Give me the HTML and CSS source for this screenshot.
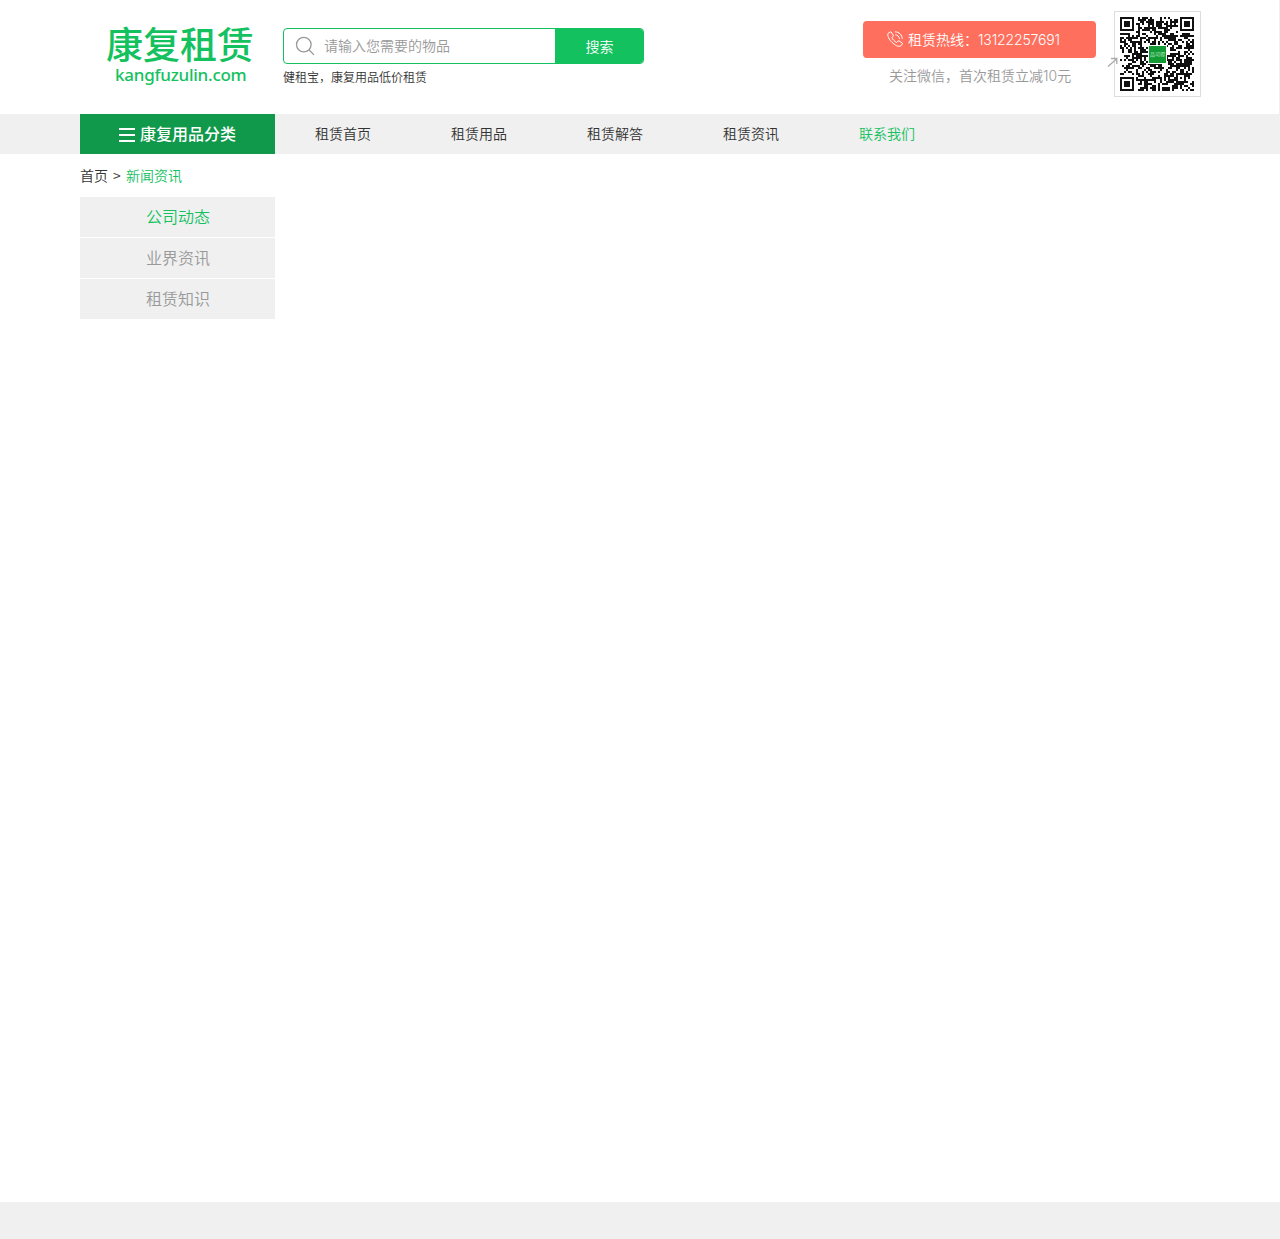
FILE: index.html
```html
<!DOCTYPE html>
<html lang="zh-CN">
<head>
<meta charset="utf-8">
<title>康复租赁 - 新闻资讯</title>
<link rel="stylesheet" href="styles.css">
</head>
<body>
<header class="header">
  <div class="header-inner">
    <a class="logo"><span class="logo-name">康复租赁</span><span class="logo-domain">kangfuzulin.com</span></a>
    <div class="search">
      <div class="search-box">
        <svg class="search-icon" width="20" height="20" viewBox="0 0 20 20" fill="none" stroke="#999" stroke-width="1.3"><circle cx="8.8" cy="8.600" r="7.300"/><path d="M13.900 13.800 19 18.900"/></svg>
        <span class="search-hint">请输入您需要的物品</span>
        <button class="search-button">搜索</button>
      </div>
      <p class="search-note">健租宝，康复用品低价租赁</p>
    </div>
    <div class="contact">
      <div class="hotline">
        <svg class="phone" width="16" height="16" viewBox="0 0 16 16" fill="none" stroke="#fff" stroke-width="1"><path d="M3.200.9 1.200 2.300C-.2 4.600 2.400 8.900 5 11.300c2.600 2.500 6.300 5.200 8.900 3.500l1.500-2-.1-.8-3.300-2.200-.9.1-1.500 1.600C7.800 10.700 5.500 8.300 4.900 6.700l1.300-1.600.1-.9L4.100 1z"/><path d="M8 .8c4 0 7.200 3.100 7.300 7.100M8.300 3.700c2.200.2 4 2 4.200 4.200"/></svg>
        <span>租赁热线：</span><span class="number">13122257691</span>
      </div>
      <p class="follow">关注微信，首次租赁立减<span class="ten">10</span>元</p>
    </div>
    <div class="qr-wrap">
      <svg class="arrow" width="12" height="12" viewBox="0 0 12 12" fill="none" stroke="#aaa" stroke-width="1.3"><path d="M1 10.500 9.500 3M4 2.500H9.800v5.500"/></svg>
      <div class="qr">
        <svg width="74" height="74" viewBox="0 0 37 37"><path id="modules" fill="#111"/></svg>
        <span class="qr-badge">品可得</span>
      </div>
    </div>
  </div>
</header>
<nav class="nav">
  <div class="nav-inner">
    <a class="category"><svg width="16" height="14" viewBox="0 0 16 14"><path d="M0 1h16M0 7h16M0 13h16" stroke="#fff" stroke-width="2"/></svg>康复用品分类</a>
    <a class="nav-link">租赁首页</a><a class="nav-link">租赁用品</a><a class="nav-link">租赁解答</a><a class="nav-link">租赁资讯</a><a class="nav-link active">联系我们</a>
  </div>
</nav>
<main class="main">
  <div class="crumbs">首页 &gt; <a class="active">新闻资讯</a></div>
  <aside class="side"><a class="side-link active">公司动态</a><a class="side-link">业界资讯</a><a class="side-link">租赁知识</a></aside>
</main>
<footer class="footer"></footer>
<script src="qr.js"></script>
</body>
</html>
```
FILE: qr.js
```js
// Draws the code's modules: three finder squares, one alignment square, and data cells.
const size = 37;
let seed = 20177;
let d = "";

function ring(x, y, x0, y0, n) {
  const r = Math.max(Math.abs(x - x0 - (n - 1) / 2), Math.abs(y - y0 - (n - 1) / 2));
  return n === 7 ? r !== 2 && r < 4 : r !== 1;
}

for (let y = 0; y < size; y++) {
  for (let x = 0; x < size; x++) {
    seed = (seed * 1103515245 + 12345) % 2147483648;
    let on = (seed >> 12) % 100 < 53;
    if (x < 8 && y < 8) on = x < 7 && y < 7 && ring(x, y, 0, 0, 7);
    else if (x > 28 && y < 8) on = x > 29 && y < 7 && ring(x, y, 30, 0, 7);
    else if (x < 8 && y > 28) on = x < 7 && y > 29 && ring(x, y, 0, 30, 7);
    else if (x > 27 && x < 33 && y > 27 && y < 33) on = ring(x, y, 28, 28, 5);
    if (on) d += `M${x} ${y}h1v1h-1z`;
  }
}
document.getElementById("modules").setAttribute("d", d);
```
FILE: styles.css
```css
* { box-sizing: border-box; }
body {
  margin: 0;
  min-height: 1239px;
  display: flex;
  flex-direction: column;
  font: 14px/20px "Noto Sans CJK SC", sans-serif;
  font-weight: 350;
  color: #333;
  background: #fff;
}
p { margin: 0; }
.header { height: 114px; border-right: 1px solid #f0f0f0; }
.header-inner { width: 1121px; margin-left: 80px; display: flex; }
.logo { width: 203px; padding: 23px 0 0 26px; display: flex; flex-direction: column; color: #14c15f; }
.logo-name { font-size: 37px; line-height: 41px; font-weight: 500; white-space: nowrap; }
.logo-domain { padding-left: 9px; font: 500 17px/22px "Noto Sans", sans-serif; letter-spacing: -.25px; }
.search { width: 361px; padding-top: 28px; }
.search-box { height: 36px; display: flex; align-items: center; border: 1px solid #14c15f; border-radius: 4px; overflow: hidden; padding-left: 11px; }
.search-hint { flex: 1; margin-left: 9px; padding-bottom: 2px; color: #999; }
.search-button { width: 88px; height: 36px; padding: 0 0 0 1px; border: 0; background: #14c15f; color: #fff; font: inherit; }
.search-note { margin-top: 3px; font-size: 12px; }
.contact { width: 233px; margin-left: 219px; padding-top: 21px; }
.hotline { height: 37px; display: flex; align-items: center; padding: 0 0 2px 24px; border-radius: 4px; background: #ff6f5e; color: #fff; }
.phone { margin-right: 5px; }
.number { padding-top: 2px; font-family: Inter, sans-serif; letter-spacing: -.15px; }
.follow { margin-top: 7px; padding-left: 26px; color: #999; }
.ten { font-family: Inter, sans-serif; }
.qr-wrap { display: flex; align-items: center; margin: 11px 0 0 11px; }
.arrow { margin: 16px -5px 0 0; z-index: 1; }
.qr { position: relative; width: 87px; height: 86px; padding: 5px; border: 1px solid #ddd; }
.qr svg { display: block; filter: blur(.5px); }
.qr-badge { position: absolute; left: 34px; top: 34px; width: 17px; height: 17px; outline: 1px solid #fff; background: #129a35; color: #d8f5df; font-size: 5px; line-height: 16px; text-align: center; }
.nav { height: 40px; background: #f0f0f0; }
.nav-inner { height: 40px; margin-left: 80px; display: flex; line-height: 38px; }
.category { width: 195px; display: flex; align-items: center; justify-content: center; gap: 5px; padding-bottom: 2px; background: #10994b; color: #fff; font-size: 16px; font-weight: 500; }
.category svg { margin-top: 4px; }
.nav-link { width: 136px; text-align: center; }
.active { color: #14c15f; }
.main { flex: 1; padding-left: 80px; }
.crumbs { height: 43px; line-height: 43px; word-spacing: 2px; }
.side { width: 195px; display: flex; flex-direction: column; gap: 1px; }
.side-link { height: 40px; padding-left: 1px; background: #f0f0f0; text-align: center; font-size: 16px; line-height: 38px; color: #999; }
.side-link.active { color: #14c15f; }
.footer { height: 37px; background: #f0f0f0; }
```
